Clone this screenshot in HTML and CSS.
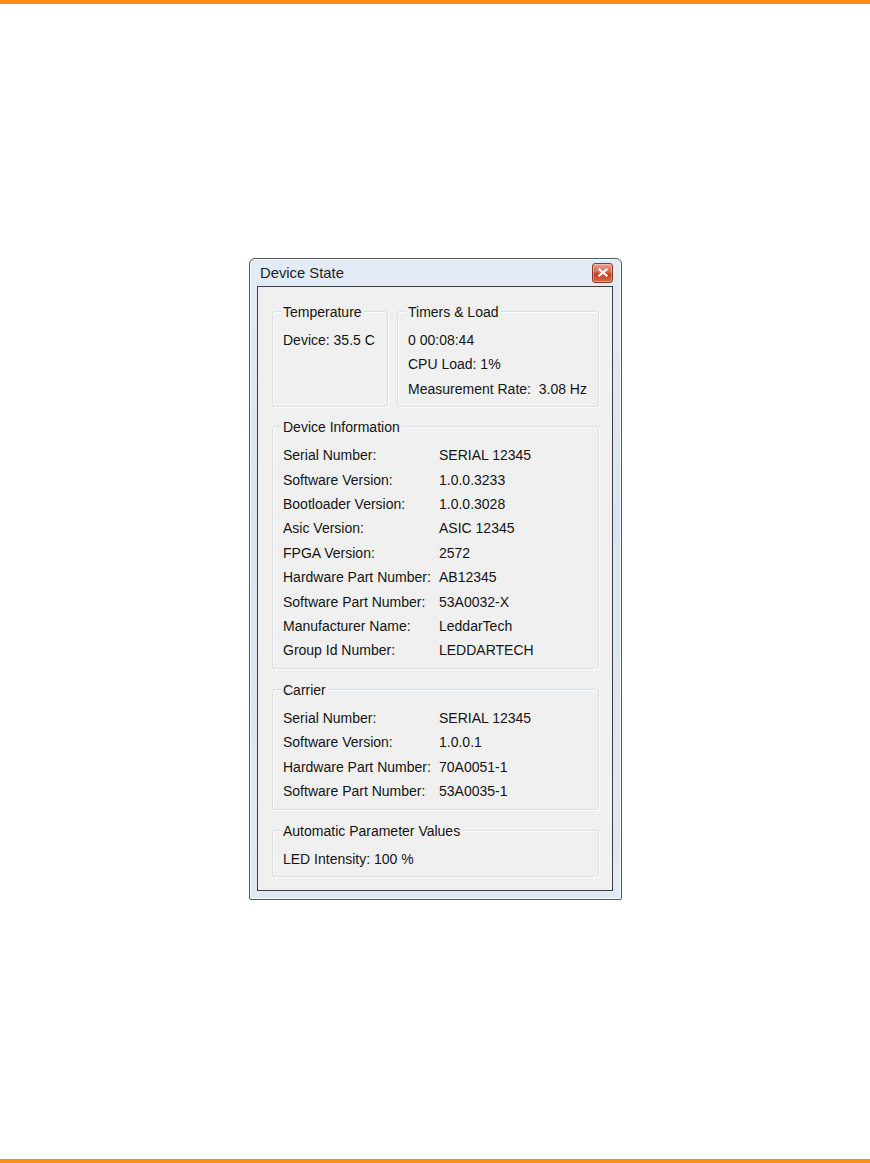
FILE: index.html
```html
<!DOCTYPE html>
<html lang="en">
<head>
  <meta charset="UTF-8">
  <meta name="viewport" content="width=device-width, initial-scale=1.0">
  <title>Device State</title>
  <link rel="stylesheet" href="styles.css">
</head>
<body>
  <div class="page-rule"></div>

  <div class="window">
    <div class="title-bar">
      <span class="title">Device State</span>
      <span class="close-button">
        <svg width="10" height="9" viewBox="0 0 10 9">
          <path d="M1.5 1.5 L8.5 7.5 M8.5 1.5 L1.5 7.5" stroke="#fff" stroke-width="2.2" stroke-linecap="square"/>
        </svg>
      </span>
    </div>

    <div class="client">
      <div class="top-row">
        <div class="group">
          <div class="group-title">Temperature</div>
          <div class="rows">
            <div>Device: 35.5 C</div>
          </div>
        </div>
        <div class="group">
          <div class="group-title">Timers &amp; Load</div>
          <div class="rows">
            <div>0 00:08:44</div>
            <div>CPU Load: 1%</div>
            <div>Measurement Rate:&nbsp; 3.08 Hz</div>
          </div>
        </div>
      </div>

      <div class="group">
        <div class="group-title">Device Information</div>
        <div class="rows table">
          <div>Serial Number:</div><div>SERIAL 12345</div>
          <div>Software Version:</div><div>1.0.0.3233</div>
          <div>Bootloader Version:</div><div>1.0.0.3028</div>
          <div>Asic Version:</div><div>ASIC 12345</div>
          <div>FPGA Version:</div><div>2572</div>
          <div>Hardware Part Number:</div><div>AB12345</div>
          <div>Software Part Number:</div><div>53A0032-X</div>
          <div>Manufacturer Name:</div><div>LeddarTech</div>
          <div>Group Id Number:</div><div>LEDDARTECH</div>
        </div>
      </div>

      <div class="group">
        <div class="group-title">Carrier</div>
        <div class="rows table">
          <div>Serial Number:</div><div>SERIAL 12345</div>
          <div>Software Version:</div><div>1.0.0.1</div>
          <div>Hardware Part Number:</div><div>70A0051-1</div>
          <div>Software Part Number:</div><div>53A0035-1</div>
        </div>
      </div>

      <div class="group">
        <div class="group-title">Automatic Parameter Values</div>
        <div class="rows">
          <div>LED Intensity: 100 %</div>
        </div>
      </div>
    </div>
  </div>

  <div class="page-rule bottom"></div>
</body>
</html>
```

FILE: styles.css
```css
body {
  margin: 0;
  min-height: 1163px;
  display: flex;
  flex-direction: column;
  background: #fff;
  font-family: "Liberation Sans", Arial, sans-serif;
  color: #141414;
}

.page-rule {
  height: 4px;
  background-color: #ff8c14;
}

.page-rule.bottom {
  margin-top: auto;
}

/* Window frame */
.window {
  align-self: flex-start;
  margin: 254px 0 0 249px;
  width: 373px;
  height: 642px;
  box-sizing: border-box;
  display: flex;
  flex-direction: column;
  padding: 0 8px 8px 7px;
  border: 1px solid #4e5966;
  border-radius: 6px 6px 2px 2px;
  background: linear-gradient(to bottom, #e3ebf6 0%, #d9e4f2 40%, #e0e9f4 100%);
  box-shadow: inset 0 0 0 1px rgba(255, 255, 255, 0.75);
}

.title-bar {
  height: 27px;
  display: flex;
  align-items: center;
  justify-content: space-between;
  padding-left: 3px;
}

.title {
  font-size: 14.8px;
  color: #1e1e1e;
}

.close-button {
  width: 19px;
  height: 18px;
  display: flex;
  align-items: center;
  justify-content: center;
  border: 1px solid #8a3a2a;
  border-radius: 3px;
  background: linear-gradient(to bottom, #e9a08c 0%, #d6694f 45%, #c2401f 55%, #d86a48 100%);
  box-shadow: inset 0 0 0 1px rgba(255, 255, 255, 0.35);
}

/* Client area */
.client {
  flex: 1;
  border: 1px solid #3e3e3e;
  background-color: #f0f0f0;
  padding: 24px 13px 0 14px;
  font-size: 14px;
}

.top-row {
  display: grid;
  grid-template-columns: 116px 1fr;
  gap: 9px;
}

.group {
  border: 1px solid #d5dfe5;
  border-radius: 3px;
  padding: 0 10px 5px 10px;
  box-shadow: 1px 1px 0 #fff, inset 1px 1px 0 #fff;
}

.group + .group {
  margin-top: 20px;
}

.top-row + .group {
  margin-top: 19px;
}

.top-row .group + .group {
  margin-top: 0;
}

.group-title {
  width: fit-content;
  margin: -8px 0 0 -2px;
  padding: 0 2px;
  line-height: 16px;
  background-color: #f0f0f0;
}

.rows {
  margin-top: 8px;
  line-height: 24.4px;
  white-space: nowrap;
}

.rows.table {
  display: grid;
  grid-template-columns: 156px 1fr;
}
```
